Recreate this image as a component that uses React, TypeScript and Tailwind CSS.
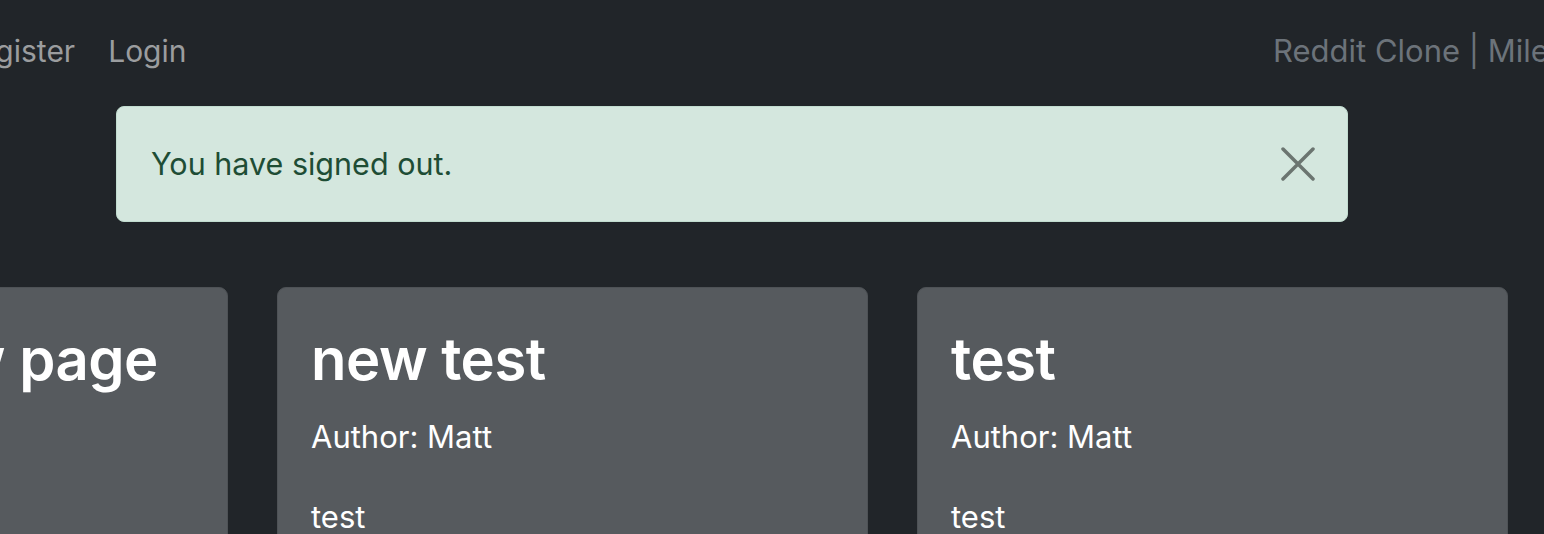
import React from "react";

function Card({ title, author, body }: { title: string; author?: string; body?: string }) {
  return (
    <div className="w-[591px] shrink-0 h-[300px] rounded-[9px] border border-[#4e5256] bg-[#565a5e] px-[33px] pt-[37px]">
      <h2 className="whitespace-nowrap text-[58px] font-semibold leading-[1.2] text-white tracking-[-0.5px]">{title}</h2>
      {author && <div className="mt-[23px] text-[31px] leading-[1.2] text-white">Author: {author}</div>}
      {body && <div className="mt-[43px] text-[31px] leading-[1.2] text-white">{body}</div>}
    </div>
  );
}

export default function App() {
  return (
    <div className="h-[534px] w-[1544px] overflow-hidden bg-[#212529] font-['Inter','Noto_Sans',sans-serif]">
      <nav className="flex h-[102px] items-center justify-between">
        <div className="ml-[-41px] flex items-center gap-[33px] whitespace-nowrap text-[30px] text-[#9b9d9f]">
          <span>Register</span>
          <span>Login</span>
        </div>
        <div className="w-[271px] shrink-0 overflow-hidden whitespace-nowrap text-[31px] text-[#6c737a]">Reddit Clone | Miles</div>
      </nav>
      <div className="ml-[116px] mt-[4px] flex h-[116px] w-[1232px] items-center justify-between rounded-[8px] border border-[#c1dccf] bg-[#d4e7de] pl-[34px] pr-[32px]">
        <span className="text-[30.5px] text-[#1e4d35]">You have signed out.</span>
        <svg width="34" height="34" viewBox="0 0 34 34" className="text-[#6b7570]">
          <path d="M2 2 L32 32 M32 2 L2 32" stroke="currentColor" strokeWidth="3.5" strokeLinecap="round" />
        </svg>
      </div>
      <div className="ml-[-363px] mt-[65px] flex gap-[49px]">
        <Card title="Testing new page" />
        <Card title="new test" author="Matt" body="test" />
        <Card title="test" author="Matt" body="test" />
      </div>
    </div>
  );
}
